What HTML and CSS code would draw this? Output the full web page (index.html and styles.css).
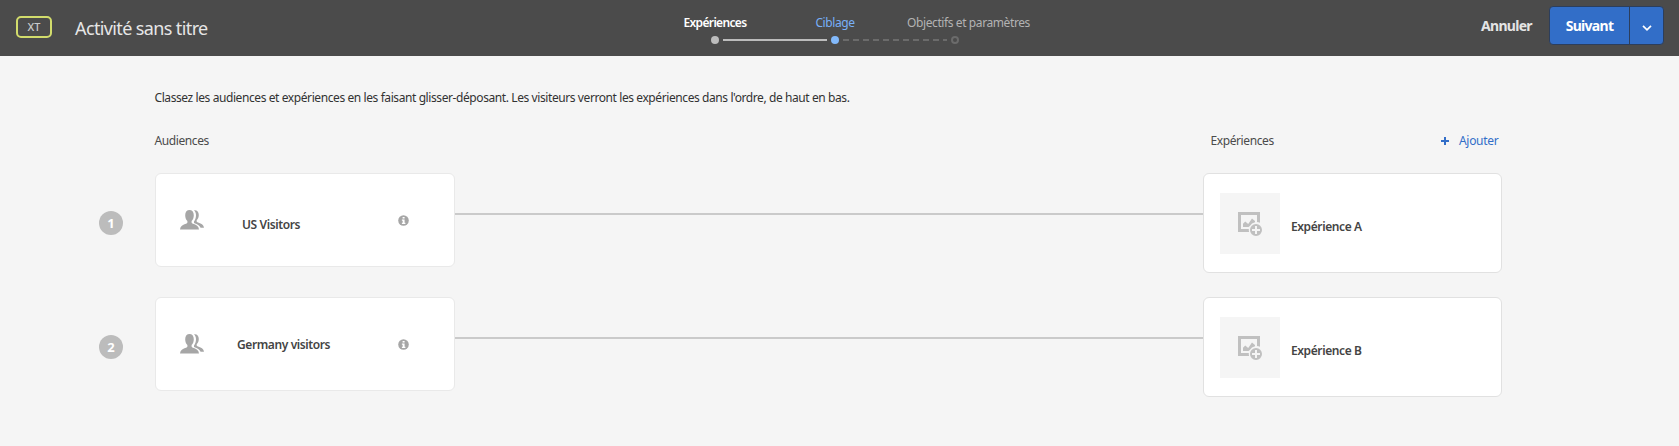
FILE: index.html
```html
<!DOCTYPE html>
<html lang="fr">
<head>
<meta charset="utf-8">
<title>Activité sans titre</title>
<link rel="stylesheet" href="styles.css">
</head>
<body>
<svg class="defs" width="0" height="0" aria-hidden="true">
  <symbol id="people" viewBox="0 0 24 20">
    <path d="M9.500 0C12 0 13.800 1.900 13.800 5.200c0 2.500-.9 4.600-2.200 5.800v1.500c0 .5.3.8.8 1 4.100 1.100 6.300 2.600 6.600 6H0c.3-3.400 2.500-4.900 6.600-6 .5-.2.8-.5.8-1V11C6.100 9.800 5.200 7.700 5.200 5.200 5.200 1.900 7 0 9.500 0z"/>
    <path d="M14 .3c2.600-.6 4.800 1.300 4.800 4.600 0 2.200-.8 3.800-1.900 5-.5.900-.4 1.800.5 2.300 3.700 1.300 6.300 2.400 6.600 5.600h-3.400c-1.100-2.300-3-3.600-6.600-4.800v-1.600c1.200-1.500 2-3.700 2-6.200 0-2-.7-3.700-2-4.900z"/>
  </symbol>
  <symbol id="info" viewBox="0 0 11 11">
    <circle cx="5.500" cy="5.500" r="5.300"/>
    <path class="cut" d="M4.600 1.900h2v1.700h-2zM3.900 4.500h2.700v3.200h.8v1.200H3.900V7.700h.8v-2h-.8z"/>
  </symbol>
  <symbol id="image-add" viewBox="0 0 24 24">
    <path d="M0 0h22v10.800a7 7 0 0 0-3-.8V3H3v14h7.800a7 7 0 0 0 .3 3H0z"/>
    <path d="M5 15v-3.200L7.200 9.500l3 2.500L14 6.500l3 2.500v1.300a7.600 7.600 0 0 0-5.200 3.700l-1.200 1z"/>
    <path fill-rule="evenodd" d="M18 12a6 6 0 1 1 0 12 6 6 0 0 1 0-12zm-1 2v3h-3v2h3v3h2v-3h3v-2h-3v-3z"/>
  </symbol>
</svg>

<header class="topbar">
  <span class="badge">XT</span>
  <h1 class="title">Activité sans titre</h1>
  <ol class="steps">
    <li class="step done"><span class="label">Expériences</span><i class="dot"></i></li>
    <li class="step current"><span class="label">Ciblage</span><i class="dot"></i></li>
    <li class="step next"><span class="label">Objectifs et paramètres</span><i class="dot"></i></li>
  </ol>
  <div class="actions">
    <span class="cancel">Annuler</span>
    <div class="split">
      <span class="go">Suivant</span>
      <span class="more"><svg width="10" height="6" viewBox="0 0 10 6"><path d="M1 .8l4 4 4-4"/></svg></span>
    </div>
  </div>
</header>

<main class="content">
  <p class="intro">Classez les audiences et expériences en les faisant glisser-déposant. Les visiteurs verront les expériences dans l'ordre, de haut en bas.</p>
  <div class="heads">
    <span class="head-audiences">Audiences</span>
    <span class="head-experiences">Expériences</span>
    <span class="add"><svg width="8" height="8" viewBox="0 0 8 8"><path d="M4 0v8M0 4h8"/></svg><b class="add-label">Ajouter</b></span>
  </div>

  <section class="row">
    <span class="num">1</span>
    <article class="audience">
      <svg class="people" width="24" height="20"><use href="#people"/></svg>
      <strong class="name us">US Visitors</strong>
      <svg class="info" width="11" height="11"><use href="#info"/></svg>
    </article>
    <i class="link"></i>
    <article class="experience">
      <span class="thumb"><svg width="24" height="24"><use href="#image-add"/></svg></span>
      <strong class="exp-name">Expérience A</strong>
    </article>
  </section>

  <section class="row">
    <span class="num">2</span>
    <article class="audience">
      <svg class="people" width="24" height="20"><use href="#people"/></svg>
      <strong class="name germany">Germany visitors</strong>
      <svg class="info" width="11" height="11"><use href="#info"/></svg>
    </article>
    <i class="link"></i>
    <article class="experience">
      <span class="thumb"><svg width="24" height="24"><use href="#image-add"/></svg></span>
      <strong class="exp-name">Expérience B</strong>
    </article>
  </section>
</main>
</body>
</html>
```

FILE: styles.css
```css
* { box-sizing: border-box; margin: 0; padding: 0; }
body {
  height: 446px;
  overflow: hidden;
  background: #f5f5f5;
  color: #323232;
  font: 12px/18px "Noto Sans", "Open Sans", sans-serif;
  white-space: nowrap;
}
.defs { position: absolute; }

.topbar { display: flex; height: 56px; background: #4b4b4b; }
.badge {
  width: 36px; height: 22px; margin: 16px 0 0 16px;
  border: 2px solid #d2dc6c; border-radius: 5px;
  color: #cacaca; font-size: 11px; font-weight: 500; line-height: 18px; text-align: center;
}
.title {
  width: 548px; margin: 14px 0 0 23px;
  color: #e6e6e6; font-size: 18px; font-weight: 400; line-height: 28px; letter-spacing: -0.62px;
}
.steps { display: flex; width: 480px; margin-left: 32px; list-style: none; }
.step { position: relative; display: flex; flex-direction: column; align-items: center; width: 120px; padding-top: 13px; }
.label { height: 23px; line-height: 19px; letter-spacing: -0.4px; }
.dot { width: 8px; height: 8px; border-radius: 50%; }
.done { color: #fff; }
.done .label { font-weight: 600; letter-spacing: -0.65px; }
.done .dot { background: #bcbcbc; }
.current { color: #78b0f8; }
.current .dot { background: #82b9fb; }
.next { color: #b3b3b3; }
.next .label { align-self: flex-start; margin-left: 12px; }
.next .dot { border: 2px solid #6b6b6b; }
.done::after, .current::after { content: ""; position: absolute; left: 68px; top: 39px; width: 104px; height: 2px; }
.done::after { background: #bcbcbc; }
.current::after { background: repeating-linear-gradient(90deg, #6b6b6b 0 6px, transparent 6px 10px); }
.actions { display: flex; margin-left: auto; padding: 6px 15px 0 0; }
.cancel { width: 68px; color: #e4e4e4; font-size: 14px; font-weight: 700; line-height: 39px; letter-spacing: -0.7px; }
.split { display: flex; width: 115px; height: 39px; border: 1px solid #2c3e5c; border-radius: 4px; background: #326ec8; color: #fff; }
.go { width: 80px; border-right: 1px solid #2c3e5c; font-size: 14px; font-weight: 700; line-height: 37px; text-align: center; letter-spacing: -0.7px; }
.more { display: flex; flex: 1; align-items: center; justify-content: center; padding-top: 4px; }
.more path { fill: none; stroke: #fff; stroke-width: 1.700; }

.content { padding: 32px 0 0 99px; }
.intro { margin-left: 55.5px; height: 43px; line-height: 19px; letter-spacing: -0.41px; }
.heads { display: flex; height: 42px; margin-left: 55.5px; color: #4b4b4b; line-height: 20px; letter-spacing: -0.4px; }
.head-audiences { width: 1056px; }
.head-experiences { width: 230.5px; }
.add { display: flex; gap: 10px; color: #326ec8; }
.add svg { margin-top: 6px; }
.add path { stroke: #326ec8; stroke-width: 2; }
.add-label { font-weight: 400; letter-spacing: -0.3px; }

.row { display: flex; align-items: flex-start; height: 124px; }
.num { width: 24px; height: 24px; margin: 38px 32px 0 0; border-radius: 50%; background: #bcbcbc; color: #fff; font-size: 13px; font-weight: 700; line-height: 24px; text-align: center; }
.audience { display: flex; width: 300px; height: 94px; border: 1px solid #e9e9e9; border-radius: 6px; background: #fff; }
.people { margin: 36px 0 0 24px; fill: #a6a6a6; }
.name, .exp-name { color: #444; font-weight: 600; letter-spacing: -0.4px; }
.name { width: 161px; margin-left: 33px; }
.us { margin-top: 42px; padding-left: 5px; }
.germany { margin-top: 38px; }
.info { margin-top: 41px; fill: #a6a6a6; }
.cut { fill: #fff; }
.link { width: 748px; height: 2px; margin-top: 40px; background: #cacaca; }
.experience { display: flex; width: 299px; height: 100px; border: 1px solid #e1e1e1; border-radius: 6px; background: #fff; }
.thumb { display: flex; width: 60px; height: 61px; margin: 19px 11px 0 16px; padding: 19px 18px; background: #f5f5f5; fill: #c0c0c0; }
.exp-name { margin-top: 44px; }
```
